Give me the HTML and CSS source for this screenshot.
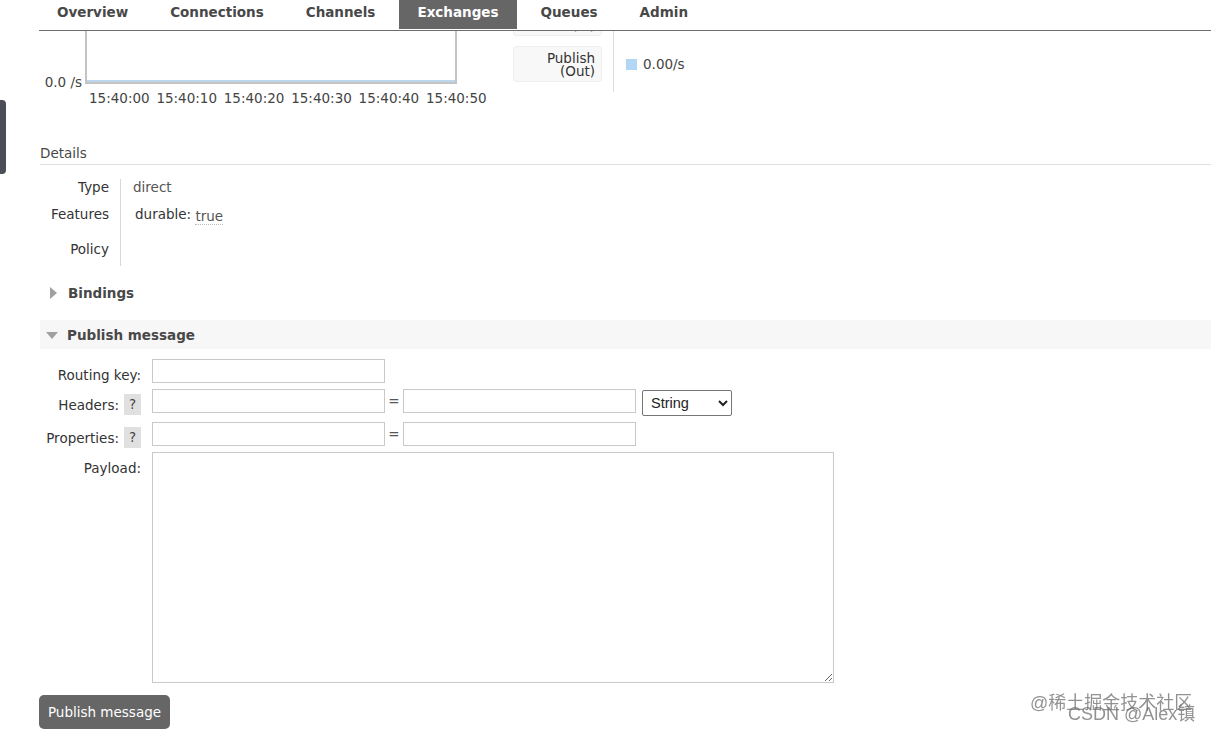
FILE: index.html
```html
<!DOCTYPE html>
<html lang="en">
<head>
<meta charset="utf-8">
<title>Exchange</title>
<link rel="stylesheet" href="styles.css">
</head>
<body>
<div class="side-tab"></div>
<header class="menu">
  <ul class="menu-list">
    <li><a class="menu-link">Overview</a></li>
    <li><a class="menu-link">Connections</a></li>
    <li><a class="menu-link">Channels</a></li>
    <li><a class="menu-link active">Exchanges</a></li>
    <li><a class="menu-link">Queues</a></li>
    <li><a class="menu-link">Admin</a></li>
  </ul>
</header>

<main class="page">
  <section class="chart-row">
    <div class="chart-col">
      <div class="plot-wrap">
        <div class="yaxis">0.0 /s</div>
        <div class="plot"><div class="series"></div></div>
      </div>
      <div class="xaxis">
        <span>15:40:00</span><span>15:40:10</span><span>15:40:20</span><span>15:40:30</span><span>15:40:40</span><span>15:40:50</span>
      </div>
    </div>
    <div class="legend">
      <div class="lg-label"><div class="lg-box first">(In)</div></div>
      <div class="lg-value"></div>
      <div class="lg-label last"><div class="lg-box">Publish<br>(Out)</div></div>
      <div class="lg-value last"><span class="swatch"></span>0.00/s</div>
    </div>
  </section>

  <h2 class="section-title">Details</h2>
  <div class="details">
    <div class="d-key r1">Type</div><div class="d-val r1">direct</div>
    <div class="d-key r2">Features</div><div class="d-val r2"><span class="feat-k">durable:</span> <span class="feat-v">true</span></div>
    <div class="d-key r3">Policy</div><div class="d-val r3"></div>
  </div>

  <h3 class="collapse-h closed"><span class="tri-right"></span>Bindings</h3>

  <h3 class="collapse-h open"><span class="tri-down"></span>Publish message</h3>

  <form class="pub-form">
    <label class="f-label"><span class="f-text">Routing key:</span></label>
    <div class="f-field"><input class="txt" type="text"></div>

    <label class="f-label"><span class="f-text">Headers:</span><span class="help">?</span></label>
    <div class="f-field">
      <input class="txt" type="text"><span class="eq">=</span><input class="txt" type="text">
      <select class="type-sel"><option>String</option></select>
    </div>

    <label class="f-label"><span class="f-text">Properties:</span><span class="help">?</span></label>
    <div class="f-field">
      <input class="txt" type="text"><span class="eq">=</span><input class="txt" type="text">
    </div>

    <label class="f-label"><span class="f-text">Payload:</span></label>
    <div class="f-field"><textarea class="payload"></textarea></div>
  </form>

  <button class="pub-btn" type="button">Publish message</button>
</main>

<div class="wm wm1">@稀土掘金技术社区</div>
<div class="wm wm2">CSDN @Alex镇</div>
</body>
</html>
```

FILE: styles.css
```css
html, body {
  margin: 0;
  padding: 0;
  background: #fff;
}
body {
  font-family: "DejaVu Sans", Verdana, sans-serif;
  font-size: 13.5px;
  color: #333;
  overflow: hidden;
  height: 734px;
}

/* fixed header */
.menu {
  position: fixed;
  top: 0;
  left: 0;
  right: 0;
  height: 31px;
  background: #fff;
  z-index: 10;
}
.menu-list {
  list-style: none;
  margin: 0 0 0 39px;
  padding: 0;
  display: flex;
  gap: 6px;
  height: 31px;
  box-sizing: border-box;
  border-bottom: 1px solid #6d6d6d;
}
.menu-link {
  display: block;
  height: 29px;
  padding: 0 18px;
  line-height: 25px;
  font-weight: bold;
  color: #484848;
}
.menu-link.active {
  background: #666;
  color: #fff;
}

.side-tab {
  position: fixed;
  left: 0;
  top: 100px;
  width: 6px;
  height: 74px;
  background: #4b4e57;
  border-radius: 0 4px 4px 0;
  z-index: 11;
}

.page {
  padding-left: 40px;
}

/* chart */
.chart-row {
  display: flex;
  height: 106px;
}
.chart-col {
  width: 417px;
}
.plot-wrap {
  display: flex;
  align-items: flex-end;
}
.yaxis {
  width: 42px;
  padding-right: 3px;
  text-align: right;
  color: #444;
  line-height: 16px;
  margin-bottom: -6px;
}
.plot {
  width: 372px;
  height: 84px;
  box-sizing: border-box;
  border: 2px solid #c4c4c4;
  border-top: 0;
  display: flex;
  align-items: flex-end;
}
.series {
  width: 100%;
  height: 2px;
  background: #bcd7ec;
}
.xaxis {
  display: grid;
  grid-template-columns: repeat(6, 67.4px);
  margin-left: 49px;
  margin-top: 6px;
  color: #444;
  line-height: 16px;
  white-space: nowrap;
}

.legend {
  margin-left: 56px;
  display: grid;
  grid-template-columns: auto auto;
  align-content: start;
}
.lg-label {
  padding: 0 11px 10px 0;
  border-right: 1px solid #ddd;
}
.lg-label.last {
  padding-bottom: 6px;
}
.lg-box {
  width: 89px;
  height: 36px;
  box-sizing: border-box;
  padding: 5px 6px 0 0;
  text-align: right;
  line-height: 13px;
  background: #f8f8f8;
  border: 1px solid #efefef;
  border-radius: 3px;
  color: #333;
}
.lg-box.first {
  padding-top: 18px;
}
.lg-value {
  display: flex;
  align-items: center;
  padding: 0 0 10px 12px;
  color: #444;
  height: 36px;
}
.swatch {
  display: inline-block;
  width: 11px;
  height: 11px;
  background: #b2d6f4;
  margin-right: 6px;
}

/* details */
.section-title {
  margin: 39px 0 0 0;
  font-size: 13.5px;
  font-weight: normal;
  color: #484848;
  line-height: 16px;
  padding-bottom: 3px;
  border-bottom: 1px solid #e0e0e0;
}
.details {
  display: grid;
  grid-template-columns: 81px auto;
  margin-top: 14px;
  line-height: 16px;
}
.d-key {
  box-sizing: border-box;
  text-align: right;
  padding-right: 11px;
  border-right: 1px solid #d8d8d8;
  color: #333;
}
.d-val {
  padding-left: 12px;
  color: #555;
}
.r1 { height: 27px; }
.r2 { height: 35px; }
.r3 { height: 25px; }
.feat-k {
  margin-left: 2px;
  color: #333;
}
.feat-v {
  position: relative;
  top: 2px;
  color: #555;
  border-bottom: 1px dotted #bbb;
}

/* collapsible headings */
.collapse-h {
  margin: 0;
  font-size: 13.5px;
  font-weight: bold;
  color: #484848;
  display: flex;
  align-items: center;
}
.collapse-h.closed {
  margin-top: 19px;
  line-height: 16px;
}
.collapse-h.open {
  margin-top: 19px;
  height: 29px;
  background: #f7f7f7;
}
.tri-right {
  width: 0;
  height: 0;
  border-top: 6px solid transparent;
  border-bottom: 6px solid transparent;
  border-left: 7px solid #a0a0a0;
  margin: 0 11px 0 10px;
}
.tri-down {
  width: 0;
  height: 0;
  border-left: 6.5px solid transparent;
  border-right: 6.5px solid transparent;
  border-top: 7px solid #a0a0a0;
  margin: 2px 9px 0 6px;
}

/* form */
.pub-form {
  display: grid;
  grid-template-columns: 101px auto;
  column-gap: 11px;
  row-gap: 6px;
  margin-top: 10px;
}
.f-label {
  display: flex;
  justify-content: flex-end;
  align-items: flex-start;
  height: 24px;
  color: #333;
  white-space: nowrap;
}
.f-text {
  padding-top: 8px;
  line-height: 16px;
}
.help {
  display: block;
  width: 17px;
  height: 21px;
  line-height: 21px;
  text-align: center;
  background: #e0e0e0;
  color: #444;
  margin: 5px 0 0 5px;
}
.f-field {
  display: flex;
  align-items: flex-start;
}
.txt {
  width: 233px;
  height: 24px;
  box-sizing: border-box;
  border: 1px solid #c9c9c9;
  margin: 0;
  padding: 2px 4px;
  font: inherit;
}
.eq {
  width: 18px;
  text-align: center;
  line-height: 24px;
  color: #555;
}
.type-sel {
  margin-left: 6px;
  margin-top: 1px;
  width: 90px;
  height: 26px;
  font-family: "Liberation Sans", Arial, sans-serif;
  font-size: 14.5px;
  color: #222;
  background: #fff;
  border: 1px solid #767676;
  border-radius: 2px;
  padding: 0 4px;
}
.payload {
  width: 682px;
  height: 231px;
  box-sizing: border-box;
  border: 1px solid #c9c9c9;
  margin: 0;
  font: inherit;
  display: block;
}

.pub-btn {
  display: block;
  margin: 12px 0 0 -1px;
  width: 131px;
  height: 34px;
  background: #666;
  color: #fff;
  border: 0;
  border-radius: 5px;
  font-family: "DejaVu Sans", Verdana, sans-serif;
  font-size: 13.5px;
  padding: 0;
}

/* watermark */
.wm {
  position: fixed;
  font-family: "Liberation Sans", "Noto Sans CJK SC", sans-serif;
  font-size: 18px;
  color: rgba(110, 110, 110, 0.75);
  white-space: nowrap;
  line-height: 20px;
}
.wm1 {
  left: 1030px;
  top: 693px;
}
.wm2 {
  left: 1068px;
  top: 704px;
}
```
